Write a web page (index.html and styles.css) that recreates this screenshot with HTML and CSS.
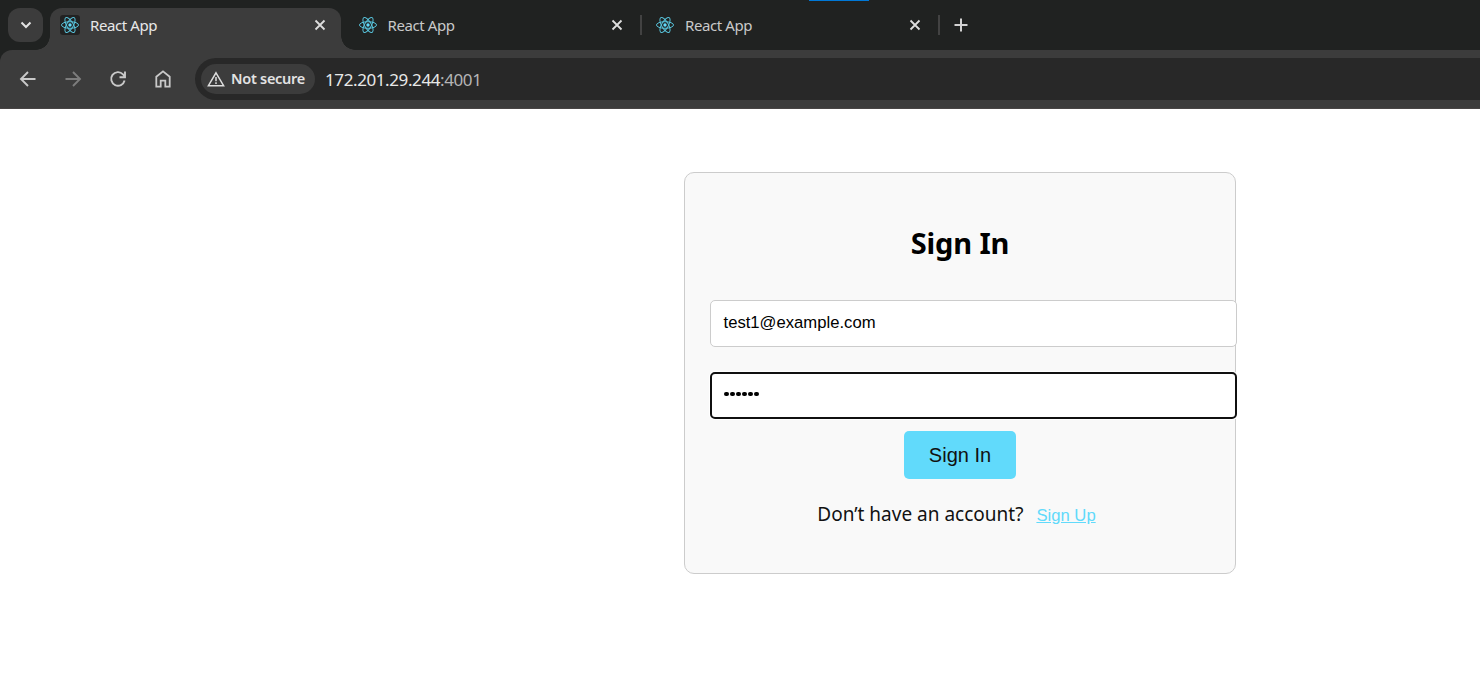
FILE: index.html
```html
<!DOCTYPE html>
<html lang="en">
<head>
<meta charset="utf-8">
<title>React App</title>
<link rel="stylesheet" href="styles.css">
</head>
<body>
<svg class="defs" width="0" height="0" aria-hidden="true">
  <symbol id="react" viewBox="0 0 20 20">
    <g fill="none" stroke="#58c4dc" stroke-width="1">
      <ellipse cx="10" cy="10" rx="8.5" ry="3.3"/>
      <ellipse cx="10" cy="10" rx="8.5" ry="3.3" transform="rotate(60 10 10)"/>
      <ellipse cx="10" cy="10" rx="8.5" ry="3.3" transform="rotate(120 10 10)"/>
    </g>
    <circle cx="10" cy="10" r="1.7" fill="#61dafb"/>
  </symbol>
  <symbol id="close" viewBox="0 0 12 12">
    <path d="M1.500 1.500l9 9M10.500 1.500l-9 9" fill="none" stroke="currentColor" stroke-width="1.800"/>
  </symbol>
</svg>
<header class="browser">
  <div class="tabstrip">
    <span class="loading"></span>
    <div class="tab-search">
      <svg width="12" height="8" viewBox="0 0 12 8"><path d="M1.500 1.500L6 6l4.500-4.500" fill="none" stroke="#e3e3e3" stroke-width="2"/></svg>
    </div>
    <div class="tab active">
      <svg class="favicon" width="20" height="20"><use href="#react"/></svg>
      <span class="title">React App</span>
      <svg class="close" width="12" height="12"><use href="#close"/></svg>
    </div>
    <div class="tab">
      <svg class="favicon" width="20" height="20"><use href="#react"/></svg>
      <span class="title">React App</span>
      <svg class="close" width="12" height="12"><use href="#close"/></svg>
    </div>
    <span class="divider"></span>
    <div class="tab third">
      <svg class="favicon" width="20" height="20"><use href="#react"/></svg>
      <span class="title">React App</span>
      <svg class="close" width="12" height="12"><use href="#close"/></svg>
    </div>
    <span class="divider"></span>
    <svg class="plus" width="14" height="14" viewBox="0 0 14 14"><path d="M7 .5v13M.5 7h13" fill="none" stroke="#d2d2d2" stroke-width="2"/></svg>
  </div>
  <div class="toolbar">
    <nav class="nav">
      <svg width="20" height="20" viewBox="0 0 20 20"><path d="M17.500 10H3.500M10 3L3 10l7 7" fill="none" stroke="#c9c9c9" stroke-width="1.900"/></svg>
      <svg width="20" height="20" viewBox="0 0 20 20"><path d="M2.500 10h14M10 3l7 7-7 7" fill="none" stroke="#7d7d7d" stroke-width="1.900"/></svg>
      <svg width="20" height="20" viewBox="0 0 20 20"><path d="M16.600 11.500A6.800 6.800 0 1 1 15 5.300L16.500 7M17 2.500v5.700h-5.500" fill="none" stroke="#c9c9c9" stroke-width="1.900"/></svg>
      <svg width="20" height="20" viewBox="0 0 20 20"><path d="M3.300 17.600V7.700L10 2.300l6.700 5.400v9.900h-4.400v-6H7.700v6z" fill="none" stroke="#c9c9c9" stroke-width="1.800"/></svg>
    </nav>
    <div class="omnibox">
      <div class="chip">
        <svg width="18" height="16" viewBox="0 0 18 16"><path d="M9 1.800L16.600 14.700H1.400z" fill="none" stroke="#dedede" stroke-width="1.500"/><path d="M9 6v4.300M9 11.300v1.700" stroke="#dedede" stroke-width="1.500"/></svg>
        <span>Not secure</span>
      </div>
      <span class="url">172.201.29.244<span class="port">:4001</span></span>
    </div>
  </div>
</header>
<main class="page">
  <form class="card">
    <h2>Sign In</h2>
    <div class="field">test1@example.com</div>
    <div class="field focused"><span class="dots"><i></i><i></i><i></i><i></i><i></i><i></i></span></div>
    <button class="submit" type="button">Sign In</button>
    <p class="signup"><span>Don’t have an account?</span><a>Sign Up</a></p>
  </form>
</main>
</body>
</html>
```
FILE: styles.css
```css
* { box-sizing: border-box; }
body { margin: 0; background: #fff; width: 1480px; height: 686px; overflow: hidden; font-family: "Noto Sans", sans-serif; }
svg { display: block; flex: none; }
.defs { position: absolute; }
.browser { height: 109px; background: #202221; }
.tabstrip { position: relative; height: 50px; padding-left: 8px; display: flex; align-items: center; }
.loading { position: absolute; left: 809px; top: 0; width: 60px; height: 1px; background: #0078d7; }
.tab-search { width: 35px; height: 34px; border-radius: 12px; background: #3c3c3c; display: flex; align-items: center; justify-content: center; margin-right: 7px; }
.tab { width: 290.5px; height: 42px; margin-top: 8px; padding: 0 14.5px 8px 10px; display: flex; align-items: center; color: #c9c9c9; font-size: 15px; letter-spacing: -.4px; }
.tab.active { position: relative; color: #e8e8e8; background: #3c3c3c; border-radius: 12px 12px 0 0; }
.tab.active::before, .tab.active::after { content: ""; position: absolute; bottom: 0; width: 14px; height: 14px; }
.tab.active::before { left: -14px; background: radial-gradient(circle at 0 0, transparent 13.5px, #3c3c3c 14px); }
.tab.active::after { right: -14px; background: radial-gradient(circle at 100% 0, transparent 13.5px, #3c3c3c 14px); }
.active .favicon { background: #222; border-radius: 3px; }
.tab:not(.active) { width: 299.5px; padding: 0 17px 8px 17.5px; }
.tab.third:not(.active) { width: 296px; padding: 0 17.5px 8px 13px; }
.title { flex: 1; margin-left: 10px; line-height: 20px; margin-top: -1px; }
.tab:not(.active):not(.third) .title { margin-left: 9.5px; }
.close { color: #dedede; }
.divider { width: 2px; height: 20px; background: #424242; }
.plus { margin-left: 13.5px; }
.toolbar { height: 59px; padding: 8px 0; display: flex; background: #3c3c3c; border-bottom: 1px solid #484545; border-top-left-radius: 12px; }
.nav { width: 195px; padding-left: 17.5px; display: flex; align-items: center; gap: 25px; }
.omnibox { flex: 1; height: 42px; padding-left: 6px; border-radius: 21px 0 0 21px; background: #282828; display: flex; align-items: center; }
.chip { width: 114px; height: 30px; padding-left: 6px; border-radius: 15px; background: #3c3c3c; display: flex; align-items: center; gap: 6px; color: #e3e3e3; font-size: 14.5px; font-weight: 600; letter-spacing: -.27px; white-space: nowrap; }
.chip span { margin-top: -2px; }
.url { margin-left: 10px; color: #e8e8e8; font-size: 17px; letter-spacing: -.4px; }
.port { color: #b5b5b5; }
.page { padding: 63px 0 0 684px; }
.card { width: 552px; height: 402px; padding: 0 25px; border: 1px solid #ccc; border-radius: 10px; background: #f9f9f9; display: flex; flex-direction: column; align-items: center; }
h2 { margin: 50px 0 37px; height: 40px; line-height: 40px; font-size: 29px; font-weight: 700; letter-spacing: -.15px; }
.field { align-self: flex-start; width: 527px; height: 47px; flex: none; padding: 0 12.5px 2px; border: 1px solid #ccc; border-radius: 5px; background: #fff; display: flex; align-items: center; font: 16.67px "Liberation Sans", Arial, sans-serif; }
.field.focused { margin-top: 25px; padding: 0 12px 3px; border: 2px solid #101010; box-shadow: 0 0 0 1px #fff; }
.dots { display: flex; gap: 1.400px; }
.dots i { width: 4.600px; height: 4.600px; border-radius: 50%; background: #000; }
.submit { flex: none; width: 112px; height: 48px; margin-top: 12px; padding: 0; border: 0; border-radius: 5px; background: #61dafb; color: #111; font: 20px "Liberation Sans", Arial, sans-serif; }
.signup { margin: 21px 0 0 -7px; height: 28px; display: flex; align-items: baseline; gap: 13px; font-size: 19px; line-height: 28px; color: #111; white-space: nowrap; }
.signup a { color: #61dafb; font: 16.67px "Liberation Sans", Arial, sans-serif; text-decoration: underline; }
```
